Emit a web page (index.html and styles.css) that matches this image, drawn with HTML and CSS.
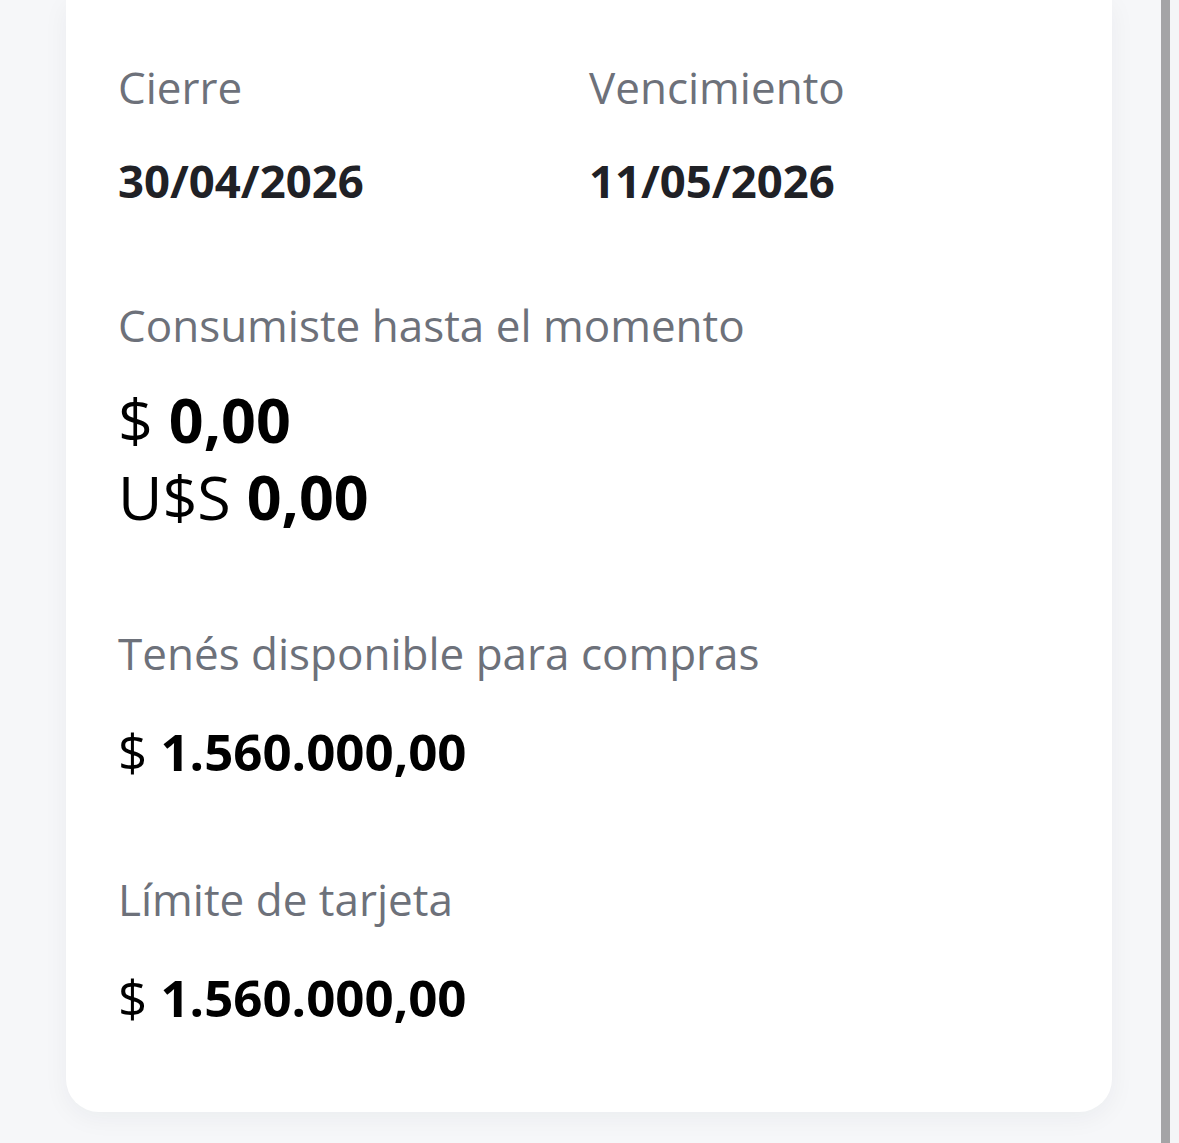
FILE: index.html
```html
<!DOCTYPE html>
<html lang="es">
<head>
<meta charset="utf-8">
<title>Resumen de tarjeta</title>
<link rel="stylesheet" href="styles.css">
</head>
<body>
<div class="page">
  <main class="content">
    <section class="card">
      <div class="row">
        <div class="field">
          <div class="label">Cierre</div>
          <div class="date">30/04/2026</div>
        </div>
        <div class="field">
          <div class="label">Vencimiento</div>
          <div class="date">11/05/2026</div>
        </div>
      </div>

      <div class="field section">
        <div class="label">Consumiste hasta el momento</div>
        <div class="big-amounts">
          <div class="big"><span class="cur">$</span> <b>0,00</b></div>
          <div class="big"><span class="cur">U$S</span> <b>0,00</b></div>
        </div>
      </div>

      <div class="field section">
        <div class="label">Tenés disponible para compras</div>
        <div class="amount"><span class="cur">$</span> <b>1.560.000,00</b></div>
      </div>

      <div class="field section">
        <div class="label">Límite de tarjeta</div>
        <div class="amount"><span class="cur">$</span> <b>1.560.000,00</b></div>
      </div>
    </section>
  </main>
  <div class="scrollbar"></div>
  <div class="edge"></div>
</div>
</body>
</html>
```

FILE: styles.css
```css
* { box-sizing: border-box; }

html, body {
  margin: 0;
  padding: 0;
  height: 100%;
}

body {
  background: #f6f7f9;
  font-family: "Open Sans", "Noto Sans", sans-serif;
  overflow: hidden;
}

.page {
  display: flex;
  height: 1143px;
}

.content {
  flex: 0 0 1161px;
  padding-left: 66px;
  padding-right: 49px;
}

.scrollbar {
  flex: 0 0 9px;
  background: #a4a4a6;
}

.edge {
  flex: 1;
  background: #f4f5f7;
}

.card {
  background: #ffffff;
  border-radius: 0 0 33px 33px;
  padding: 60px 52px 85px;
  box-shadow: 0 6px 26px rgba(20, 30, 60, 0.05);
}

.row {
  display: grid;
  grid-template-columns: 1fr 1fr;
}

.field {
  display: flex;
  flex-direction: column;
}

.section {
  margin-top: 91px;
}

.label {
  font-size: 44px;
  line-height: 54px;
  color: #6d717a;
  font-weight: 400;
}

.date {
  margin-top: 39px;
  font-size: 45.5px;
  line-height: 54px;
  font-weight: 700;
  color: #202126;
}

.big-amounts {
  margin-top: 29px;
}

.big {
  font-size: 61px;
  line-height: 77px;
  color: #000;
}

.amount {
  margin-top: 41px;
  font-size: 51px;
  line-height: 60px;
  color: #000;
}

.cur {
  font-weight: 400;
}

b {
  font-weight: 700;
}
```
